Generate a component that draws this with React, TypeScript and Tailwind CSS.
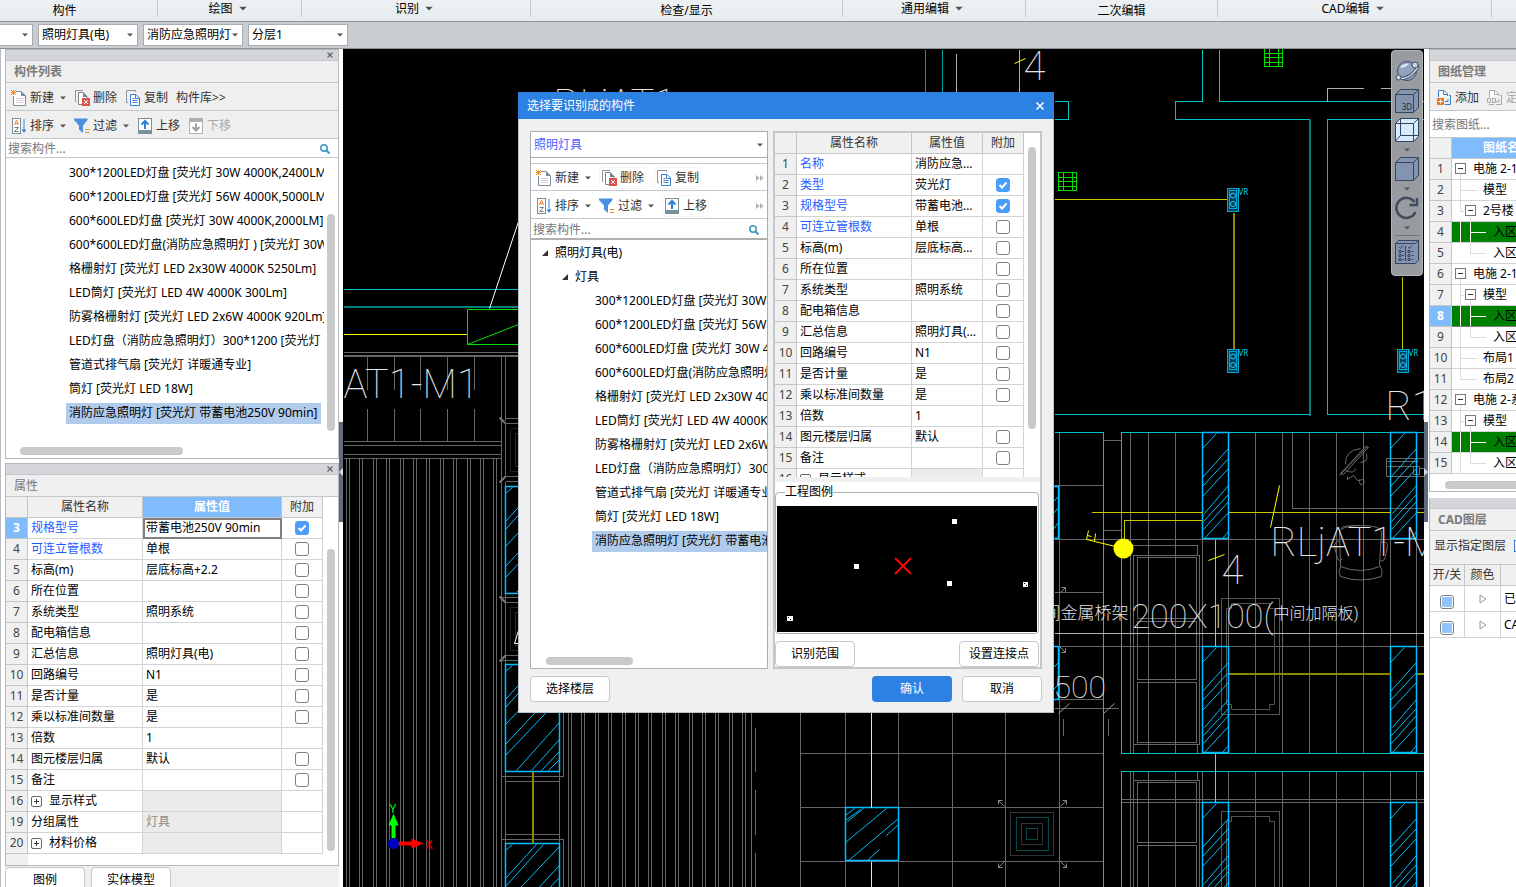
import { useState } from "react";
import type { ReactNode } from "react";
import clsx from "clsx";

type PropertyRow = {
  no: number;
  name: string;
  value?: string;
  attach?: "on" | "off";
  required?: boolean;
  group?: boolean;
  readOnly?: boolean;
};

const ribbonGroups = [
  { name: "构件" },
  { name: "绘图", menu: true },
  { name: "识别", menu: true },
  { name: "检查/显示" },
  { name: "通用编辑", menu: true },
  { name: "二次编辑" },
  { name: "CAD编辑", menu: true },
];

const components = [
  "300*1200LED灯盘 [荧光灯 30W 4000K,2400LM]",
  "600*1200LED灯盘 [荧光灯 56W 4000K,5000LM]",
  "600*600LED灯盘 [荧光灯 30W 4000K,2000LM]",
  "600*600LED灯盘(消防应急照明灯 ) [荧光灯 30W]",
  "格栅射灯 [荧光灯 LED 2x30W 4000K 5250Lm]",
  "LED筒灯 [荧光灯 LED 4W 4000K 300Lm]",
  "防雾格栅射灯 [荧光灯 LED 2x6W 4000K 920Lm]",
  "LED灯盘（消防应急照明灯）300*1200 [荧光灯",
  "管道式排气扇 [荧光灯 详暖通专业]",
  "筒灯 [荧光灯 LED 18W]",
  "消防应急照明灯 [荧光灯 带蓄电池250V 90min]",
];

const baseRows: PropertyRow[] = [
  { no: 4, name: "可连立管根数", value: "单根", attach: "off", required: true },
  { no: 5, name: "标高(m)", value: "层底标高+2.2", attach: "off" },
  { no: 6, name: "所在位置", attach: "off" },
  { no: 7, name: "系统类型", value: "照明系统", attach: "off" },
  { no: 8, name: "配电箱信息", attach: "off" },
  { no: 9, name: "汇总信息", value: "照明灯具(电)", attach: "off" },
  { no: 10, name: "回路编号", value: "N1", attach: "off" },
  { no: 11, name: "是否计量", value: "是", attach: "off" },
  { no: 12, name: "乘以标准间数量", value: "是", attach: "off" },
  { no: 13, name: "倍数", value: "1" },
  { no: 14, name: "图元楼层归属", value: "默认", attach: "off" },
  { no: 15, name: "备注", attach: "off" },
  { no: 16, name: "显示样式", group: true, readOnly: true },
];

const modelRow: PropertyRow = {
  no: 3,
  name: "规格型号",
  value: "带蓄电池250V 90min",
  attach: "on",
  required: true,
};

const panelRows: PropertyRow[] = [
  modelRow,
  ...baseRows,
  { no: 19, name: "分组属性", value: "灯具", readOnly: true },
  { no: 20, name: "材料价格", group: true, readOnly: true },
];

const dialogRows: PropertyRow[] = [
  { no: 1, name: "名称", value: "消防应急照明灯", required: true },
  { no: 2, name: "类型", value: "荧光灯", attach: "on", required: true },
  modelRow,
  ...baseRows,
];

const drawings = [
  { name: "电施 2-1", level: 0, box: true, guide: "M8 15V20" },
  { name: "模型", level: 1, guide: "M8 0V20M8 10H25" },
  { name: "2号楼", level: 1, box: true, guide: "M8 0V10H12M18 15V20" },
  { name: "入区", level: 2, guide: "M8 0V20M18 0V20M18 10H34", used: true },
  { name: "入区", level: 2, guide: "M18 0V10H34" },
  { name: "电施 2-1", level: 0, box: true, guide: "M8 15V20" },
  { name: "模型", level: 1, box: true, guide: "M8 0V20M8 10H12M18 15V20" },
  { name: "入区", level: 2, guide: "M8 0V20M18 0V20M18 10H34", used: true, current: true },
  { name: "入区", level: 2, guide: "M8 0V20M18 0V10H34" },
  { name: "布局1", level: 1, guide: "M8 0V20M8 10H25" },
  { name: "布局2", level: 1, guide: "M8 0V10H25" },
  { name: "电施 2-系", level: 0, box: true, guide: "M8 15V20" },
  { name: "模型", level: 1, box: true, guide: "M8 0V20M8 10H12M18 15V20" },
  { name: "入区", level: 2, guide: "M8 0V20M18 0V20M18 10H34", used: true },
  { name: "入区", level: 2, guide: "M8 0V20M18 0V10H34" },
];

/* ---------- icons ---------- */

function Caret({ className = "h-1 w-1.5" }: { className?: string }) {
  return (
    <svg viewBox="0 0 6 4" className={clsx("shrink-0", className)} aria-hidden="true">
      <path d="M0 0.500H6L3 3.500Z" fill="#555" />
    </svg>
  );
}

function IconNew() {
  return (
    <svg viewBox="0 0 16 16" className="size-4" fill="none" aria-hidden="true">
      <path d="M5 1.500H10L14.500 6V15.500H2.500V6" fill="#fff" stroke="#78909c" />
      <path d="M10 1V6H15Z" fill="#78909c" />
      <path d="M5 8.500H12.500M5 10.500H12.500M5 12.500H12.500" stroke="#d8d0e0" />
      <path d="M0 0.500H1M2 0.500H3M4 0.500H5M1 1.500H4M0 2.500H5M1 3.500H4M0 4.500H1M2 4.500H3M4 4.500H5" stroke="#f0932b" />
    </svg>
  );
}

function IconDelete() {
  return (
    <svg viewBox="0 0 16 16" className="size-4" fill="none" aria-hidden="true">
      <path d="M1.500 12V0.500H9" stroke="#8a9499" />
      <path d="M8 14.500H4.500V2.500H9L13 6.500V8" fill="#fff" stroke="#78828a" />
      <path d="M9 2V7H13.500Z" fill="#78828a" />
      <rect x="8" y="8" width="8" height="8" fill="#d9534f" />
      <path d="M10 10L14 14M14 10L10 14" stroke="#fff" />
    </svg>
  );
}

function IconCopy() {
  return (
    <svg viewBox="0 0 16 16" className="size-4" fill="none" aria-hidden="true">
      <path d="M3 12.500H1.500V0.500H10.500V2" stroke="#8a9499" />
      <path d="M5.500 4.500H11L14.500 8V15.500H5.500Z" fill="#fff" stroke="#3a7fd0" />
      <path d="M10.500 4.500V8.500H14.500M7.500 8.500H9.500M7.500 10.500H12.500M7.500 12.500H12.500" stroke="#3a7fd0" />
    </svg>
  );
}

function IconSort() {
  return (
    <svg viewBox="0 0 16 16" className="size-4" fill="none" aria-hidden="true">
      <rect x="1.500" y="0.500" width="8" height="15" fill="#fff" stroke="#78909c" />
      <path d="M3.500 7L5.500 2L7.500 7M4 5.500H7" stroke="#f08030" />
      <path d="M3.500 9.500H7.500L3.500 13.500H7.500" stroke="#707880" />
      <path d="M13 1V13" stroke="#3a86dc" />
      <path d="M10.500 11.500H15.500L13 15Z" fill="#3a86dc" />
    </svg>
  );
}

function IconFilter() {
  return (
    <svg viewBox="0 0 16 16" className="size-4" fill="none" aria-hidden="true">
      <path d="M0 0.500H13.500V2L9 7.500V15L5 11.500V7.500L0 2Z" fill="#4a90e2" />
      <path d="M11 11.500H15.500M11 14.500H15.500" stroke="#f0932b" />
    </svg>
  );
}

function IconMove({ down }: { down?: boolean }) {
  return (
    <svg viewBox="0 0 16 16" className="size-4" fill="none" aria-hidden="true">
      {down ? (
        <>
          <rect x="1.500" y="0.500" width="13" height="15" fill="#fff" stroke="#b0b0b0" />
          <rect x="1" y="0" width="14" height="4" fill="#b0b0b0" />
          <path d="M8 5.500V12M4.500 9L8 12.500L11.500 9" stroke="#a0a0a0" strokeWidth="2" />
        </>
      ) : (
        <>
          <rect x="1.500" y="0.500" width="13" height="15" fill="#fff" stroke="#78909c" />
          <rect x="1" y="12" width="14" height="4" fill="#78909c" />
          <path d="M8 11V3.500M4.500 6.500L8 3L11.500 6.500" stroke="#2f80d8" strokeWidth="2" />
        </>
      )}
    </svg>
  );
}

function IconSearch() {
  return (
    <svg viewBox="0 0 10 10" className="size-2.5 shrink-0" fill="none" aria-hidden="true">
      <circle cx="4" cy="4" r="3.200" stroke="#3a97c9" strokeWidth="1.500" />
      <path d="M6.200 6.200L9.500 9.500" stroke="#3a97c9" strokeWidth="2" />
    </svg>
  );
}

function IconSheet({ disabled }: { disabled?: boolean }) {
  const line = disabled ? "#a8a8a8" : "#3a7fd0";
  return (
    <svg viewBox="0 0 16 16" className="size-4" fill="none" aria-hidden="true">
      <path d="M2.500 7V0.500H8L11.500 4V6" fill="#fff" stroke={line} />
      <path d="M7.500 0.500V4.500H11.500M9 14.500H14.500V5.500H13M9 11.500H12V9" stroke={line} />
      {disabled ? (
        <path d="M0.500 8.500H3.500V12.500H0.500ZM5.500 8.500H8.500V12.500H5.500ZM2 14.500H7" stroke={line} />
      ) : (
        <>
          <rect x="1" y="8" width="7" height="7" fill="#f07a24" />
          <path d="M4.500 9.500V13.500M2.500 11.500H6.500" stroke="#fff" />
        </>
      )}
    </svg>
  );
}

function PlusBox() {
  return (
    <svg viewBox="0 0 11 11" className="size-[11px] shrink-0" fill="none" aria-hidden="true">
      <rect x="0.500" y="0.500" width="10" height="10" rx="1.500" fill="#fff" stroke="#666" />
      <path d="M3 5.500H8M5.500 3V8" stroke="#333" />
    </svg>
  );
}

function Cube({ label, open }: { label?: string; open?: boolean }) {
  return (
    <svg viewBox="0 0 24 24" className="size-6" fill="none" stroke="#34455c" aria-hidden="true">
      <path d="M0.500 5.500L5.500 0.500H23.500V18.500L18.500 23.500H0.500Z" fill={open ? "#d6ebff" : "#8294ae"} />
      <path d="M0.500 5.500H18.500V23.500M18.500 5.500L23.500 0.500" />
      {open && <path d="M5.500 0.500V17.500H23M5.500 17.500L0.500 23" />}
      {label && (
        <text x="12" y="21" textAnchor="middle" fontSize="8" fill="#1c2c40" stroke="none">
          {label}
        </text>
      )}
    </svg>
  );
}

/* ---------- shared controls ---------- */

function Combo({ label, value, className }: { label: string; value: string; className?: string }) {
  return (
    <div className={clsx("relative border border-[#a9adb1] bg-white", className)}>
      <select
        aria-label={label}
        defaultValue={value}
        className="block h-full w-full appearance-none overflow-hidden bg-transparent pl-[3px] outline-none"
      >
        <option>{value}</option>
      </select>
      <Caret className="pointer-events-none absolute top-1/2 right-1 h-1 w-1.5 -translate-y-1/2" />
    </div>
  );
}

function ToolButton(props: {
  icon?: ReactNode;
  label: string;
  menu?: boolean;
  disabled?: boolean;
  boxed?: boolean;
}) {
  return (
    <button
      type="button"
      disabled={props.disabled}
      className={clsx(
        "flex shrink-0 items-center gap-[3px] whitespace-nowrap",
        props.disabled ? "text-[#a8a8a8]" : "text-[#333]",
        props.boxed && "h-[22px] rounded-sm border border-[#f5f5f5] px-px"
      )}
    >
      {props.icon}
      <span>{props.label}</span>
      {props.menu && <Caret className="ml-[3px] h-1 w-1.5" />}
    </button>
  );
}

function SearchBox({ label, className }: { label: string; className?: string }) {
  return (
    <div className={clsx("flex shrink-0 items-center bg-white pt-0.5 pr-2 pl-0.5", className)}>
      <input
        type="search"
        aria-label={label}
        placeholder={label}
        className="min-w-0 flex-1 outline-none placeholder:text-[#777]"
      />
      <IconSearch />
    </div>
  );
}

function CheckBox({ label, defaultChecked }: { label: string; defaultChecked: boolean }) {
  return (
    <span className="relative mx-auto grid size-3.5 place-items-center">
      <input
        type="checkbox"
        aria-label={label}
        defaultChecked={defaultChecked}
        className="peer size-3.5 appearance-none rounded-[3px] border border-[#808080] bg-white checked:border-[#4a9df8] checked:bg-[#4a9df8]"
      />
      <svg
        viewBox="0 0 14 14"
        className="pointer-events-none absolute hidden size-3.5 peer-checked:block"
        fill="none"
        aria-hidden="true"
      >
        <path d="M3.500 7L6 9.500L10.500 4.500" stroke="#fff" strokeWidth="2" />
      </svg>
    </span>
  );
}

function PropertyTable({ rows, current, compact }: { rows: PropertyRow[]; current?: number; compact?: boolean }) {
  const head = "border-r border-b border-[#c6c6c6]";
  return (
    <table className={clsx("table-fixed border-separate border-spacing-0", compact ? "w-[249px]" : "w-[317px]")}>
      <colgroup>
        <col className="w-[22px]" />
        <col className="w-[115px]" />
        <col className={compact ? "w-[71px]" : "w-[139px]"} />
        <col className="w-[41px]" />
      </colgroup>
      <thead>
        <tr className="h-[21px] bg-[#f0f0f0] text-[#333]">
          <th className={head} aria-label="行号" />
          <th className={clsx(head, "font-normal")}>属性名称</th>
          <th className={clsx(head, current ? "bg-[#80bbfb] font-bold text-white" : "font-normal")}>属性值</th>
          <th className={clsx(head, "font-normal")}>附加</th>
        </tr>
      </thead>
      <tbody>
        {rows.map((row) => (
          <tr key={row.no} className="h-[21px]">
            <td
              className={clsx(
                "border-r border-b border-[#c6c6c6] text-center",
                row.no === current ? "bg-[#80bbfb] font-bold text-white" : "bg-[#f0f0f0] text-[#444]"
              )}
            >
              {row.no}
            </td>
            <td className={clsx("border-r border-b border-[#d4d4d4] pl-[3px]", row.required && "text-[#1f5eff]")}>
              <span className="flex items-center gap-[7px] whitespace-nowrap">
                {row.group && <PlusBox />}
                {row.name}
              </span>
            </td>
            <td
              className={clsx(
                "border-r border-b border-[#d4d4d4] pr-1 pl-[3px]",
                row.readOnly && "bg-[#ebebeb] text-[#8c8c8c]",
                row.no === current && "outline-2 -outline-offset-2 outline-[#808080]"
              )}
            >
              <span className="block truncate">{row.value}</span>
            </td>
            <td className="border-r border-b border-[#d4d4d4]">
              {row.attach && <CheckBox label={row.name} defaultChecked={row.attach === "on"} />}
            </td>
          </tr>
        ))}
      </tbody>
    </table>
  );
}

function ComponentItem({ name, selected, onSelect }: { name: string; selected: boolean; onSelect: () => void }) {
  return (
    <li className="flex h-6 items-center">
      <button
        type="button"
        onClick={onSelect}
        className={clsx("h-[21px] px-[3px] whitespace-pre", selected && "bg-[#b0cbec]")}
      >
        {name}
      </button>
    </li>
  );
}

function PanelHead({ title, closable, bold }: { title: string; closable?: boolean; bold?: boolean }) {
  return (
    <>
      <div className="flex h-[11px] shrink-0 items-center justify-end border-b border-[#c3c7cc] bg-[#d5d6db] pr-[5px]">
        {closable && (
          <button type="button" aria-label={"关闭" + title}>
            <svg viewBox="0 0 6 6" className="size-1.5" fill="none" stroke="#666" aria-hidden="true">
              <path d="M0.500 0.500L5.500 5.500M5.500 0.500L0.500 5.500" strokeWidth="1.300" />
            </svg>
          </button>
        )}
      </div>
      <h2
        className={clsx(
          "flex h-[22px] shrink-0 items-center border-b border-[#c3c7cc] bg-[#efefef] pl-2 text-[#7a7a7a]",
          bold && "font-bold"
        )}
      >
        {title}
      </h2>
    </>
  );
}

/* ---------- docks ---------- */

function LeftDock() {
  const [selected, setSelected] = useState(10);

  return (
    <aside className="relative flex w-[343px] shrink-0 flex-col border-l border-[#b9bcc0] bg-white pr-1 pl-1">
      <section className="flex h-[410px] shrink-0 flex-col border border-[#b4b7bb]">
        <PanelHead title="构件列表" closable bold />
        <div className="flex h-7 shrink-0 items-center gap-2 border-b border-[#c3c7cc] bg-[#efefef] pt-0.5 pl-[5px]">
          <ToolButton icon={<IconNew />} label="新建" menu />
          <ToolButton icon={<IconDelete />} label="删除" />
          <ToolButton icon={<IconCopy />} label="复制" />
          <ToolButton label="构件库&gt;&gt;" />
        </div>
        <div className="flex h-7 shrink-0 items-center gap-2 border-b border-[#c3c7cc] bg-[#efefef] pt-0.5 pl-[5px]">
          <ToolButton icon={<IconSort />} label="排序" menu />
          <ToolButton icon={<IconFilter />} label="过滤" menu />
          <ToolButton icon={<IconMove />} label="上移" />
          <ToolButton icon={<IconMove down />} label="下移" disabled />
        </div>
        <SearchBox label="搜索构件..." className="h-[19px] border-b border-[#c3c7cc]" />
        <div className="relative min-h-0 flex-1 pt-[3px] pr-3.5 pl-[60px]">
          <ul className="overflow-hidden">
            {components.map((name, i) => (
              <ComponentItem key={name} name={name} selected={i === selected} onSelect={() => setSelected(i)} />
            ))}
          </ul>
          <div className="absolute top-14 right-[3px] h-[217px] w-2 rounded-full bg-[#c9c9c9]" />
          <div className="absolute bottom-[3px] left-3.5 h-2 w-[163px] rounded-full bg-[#c9c9c9]" />
        </div>
      </section>

      <section className="mt-1 flex h-[403px] shrink-0 flex-col border border-[#b4b7bb]">
        <PanelHead title="属性" closable />
        <div className="relative min-h-0 flex-1 overflow-hidden">
          <PropertyTable rows={panelRows} current={3} />
          <div className="h-full w-[22px] bg-[#f0f0f0]" />
          <div className="absolute top-[52px] right-[3px] bottom-3.5 w-2 rounded-full bg-[#c9c9c9]" />
        </div>
      </section>

      <div className="flex min-h-0 flex-1 items-start gap-1.5 overflow-hidden bg-[#efefef] pt-px">
        <button type="button" className="h-[26px] w-20 shrink-0 rounded-sm border border-[#c6c6c6] bg-white">
          图例
        </button>
        <button type="button" className="h-[26px] w-20 shrink-0 rounded-sm border border-[#c6c6c6] bg-white">
          实体模型
        </button>
      </div>

      <button
        type="button"
        aria-label="收起左侧面板"
        className="absolute top-[373px] right-0 grid h-[100px] w-1 place-items-center bg-[#5f6b7a]"
      >
        <svg viewBox="0 0 4 8" className="h-2 w-1" aria-hidden="true">
          <path d="M4 0V8L0 4Z" fill="#d8dce0" />
        </svg>
      </button>
    </aside>
  );
}

function RightDock() {
  return (
    <aside className="relative flex w-[92px] shrink-0 flex-col overflow-hidden bg-white pl-[5px]">
      <section className="flex h-[443px] shrink-0 flex-col border-y border-l border-[#b4b7bb]">
        <PanelHead title="图纸管理" bold />
        <div className="flex h-7 shrink-0 items-center gap-2 border-b border-[#c3c7cc] bg-[#efefef] pt-0.5 pl-1.5">
          <ToolButton icon={<IconSheet />} label="添加" />
          <ToolButton icon={<IconSheet disabled />} label="定位" disabled />
        </div>
        <SearchBox label="搜索图纸..." className="h-[27px] w-36 border-b border-[#c3c7cc]" />
        <div className="h-[339px] shrink-0 overflow-hidden">
          <table className="w-[168px] table-fixed border-separate border-spacing-0">
            <colgroup>
              <col className="w-[22px]" />
              <col />
            </colgroup>
            <thead>
              <tr className="h-[21px]">
                <th className="border-r border-b border-[#c6c6c6] bg-[#f0f0f0]" aria-label="行号" />
                <th className="border-b border-[#c6c6c6] bg-[#80bbfb] pl-[31px] text-left whitespace-nowrap text-white">
                  图纸名称
                </th>
              </tr>
            </thead>
            <tbody>
              {drawings.map((row, i) => (
                <tr key={i} className="h-[21px]">
                  <td
                    className={clsx(
                      "border-r border-b border-[#c6c6c6] text-center",
                      row.current ? "bg-[#80bbfb] font-bold text-white" : "bg-[#f0f0f0] text-[#444]"
                    )}
                  >
                    {i + 1}
                  </td>
                  <td
                    className={clsx(
                      "border-b p-0",
                      row.used ? "bg-[#008000]" : "bg-white",
                      row.current ? "border-[#808080]" : "border-[#d4d4d4]"
                    )}
                  >
                    <span className="flex h-5 items-center whitespace-nowrap">
                      <svg
                        width={21 + row.level * 10}
                        height="20"
                        fill="none"
                        className="shrink-0"
                        shapeRendering="crispEdges"
                        aria-hidden="true"
                      >
                        <path d={row.guide} stroke={row.used ? "#fff" : "#dcdcdc"} />
                        {row.box && (
                          <g transform={row.level ? "translate(13 4)" : "translate(3 4)"}>
                            <rect x="0.500" y="0.500" width="10" height="10" rx="1" fill="#fff" stroke="#777" />
                            <path d="M3 5.500H8" stroke="#333" />
                          </g>
                        )}
                      </svg>
                      {row.name}
                    </span>
                  </td>
                </tr>
              ))}
            </tbody>
          </table>
        </div>
        <div className="mt-1 ml-[15px] h-2 rounded-l-full bg-[#c9c9c9]" />
      </section>

      <section className="mt-1.5 flex min-h-0 flex-1 flex-col border-l border-[#b4b7bb]">
        <PanelHead title="CAD图层" bold />
        <div className="flex h-[33px] shrink-0 items-center gap-2 bg-[#efefef] pb-1 pl-1 whitespace-nowrap text-[#333]">
          显示指定图层
          <svg viewBox="0 0 14 14" className="size-3.5 shrink-0" fill="none" stroke="#3a7fd0" aria-hidden="true">
            <rect x="0.500" y="1.500" width="13" height="11" />
            <path d="M3 5.500H11M3 8.500H11" />
          </svg>
        </div>
        <table className="w-[168px] table-fixed border-separate border-spacing-0 border-t border-[#c6c6c6]">
          <colgroup>
            <col className="w-[35px]" />
            <col className="w-9" />
            <col />
          </colgroup>
          <thead>
            <tr className="h-[21px] bg-[#f0f0f0] text-[#333]">
              <th className="border-r border-b border-[#c6c6c6] font-normal whitespace-nowrap">开/关</th>
              <th className="border-r border-b border-[#c6c6c6] font-normal">颜色</th>
              <th className="border-b border-[#c6c6c6]" aria-label="名称" />
            </tr>
          </thead>
          <tbody>
            {["已提取", "CAD"].map((name) => (
              <tr key={name} className="h-[26px]">
                <td className="border-r border-b border-[#d4d4d4] pt-1.5 text-center">
                  <input
                    type="checkbox"
                    aria-label={name}
                    defaultChecked
                    className="mx-auto block size-3.5 appearance-none rounded-[3px] border border-[#808080] bg-white p-px checked:bg-[#90c4ff] checked:bg-clip-content"
                  />
                </td>
                <td className="border-r border-b border-[#d4d4d4]">
                  <svg viewBox="0 0 8 10" className="mx-auto h-2.5 w-2" fill="none" aria-hidden="true">
                    <path d="M1 1L7 5L1 9Z" stroke="#999" />
                  </svg>
                </td>
                <td className="border-b border-[#d4d4d4] pl-[3px]">{name}</td>
              </tr>
            ))}
          </tbody>
        </table>
      </section>

      <button
        type="button"
        aria-label="收起右侧面板"
        className="absolute top-[373px] left-0 grid h-[100px] w-1 place-items-center bg-[#5f6b7a]"
      >
        <svg viewBox="0 0 4 8" className="h-2 w-1" aria-hidden="true">
          <path d="M0 0V8L4 4Z" fill="#d8dce0" />
        </svg>
      </button>
    </aside>
  );
}

/* ---------- drawing ---------- */

function Column({ x, y }: { x: number; y: number }) {
  return (
    <g transform={`translate(${x} ${y})`} stroke="#00bfff">
      <path
        strokeWidth="1"
        d="M0 16L14 1M0 45L26 16M0 54L26 26M0 64L26 36M2 81L26 53M1 89L26 62M1 97L26 69M2 106L26 80M20 106L26 99"
      />
      <rect width="26" height="106" strokeWidth="1.500" />
    </g>
  );
}

function WideColumn({ x, y }: { x: number; y: number }) {
  return (
    <g transform={`translate(${x} ${y})`} stroke="#00bfff">
      <path
        strokeWidth="1"
        d="M0 7L7 1M0 35L31 1M0 43L38 1M0 60L54 3M0 80L54 22M0 91L54 34M11 106L54 58M26 106L54 75M36 106L54 87M43 106L54 95"
      />
      <rect width="54" height="107" strokeWidth="1.500" />
    </g>
  );
}

function Socket({ x, y }: { x: number; y: number }) {
  return (
    <g transform={`translate(${x} ${y})`} stroke="#00a8d8" fill="#00415a">
      <rect width="11" height="23" />
      <rect x="2" y="2" width="7" height="18" />
      <circle cx="5.500" cy="7" r="2.500" stroke="#30c8ff" />
      <circle cx="5.500" cy="15.500" r="2.500" stroke="#30c8ff" />
      <text x="11" y="6" fontSize="8" fill="#00d0f0" stroke="none">
        VR
      </text>
    </g>
  );
}

function GreenGrid({ x, y }: { x: number; y: number }) {
  return (
    <g transform={`translate(${x} ${y})`} stroke="#00e000" shapeRendering="crispEdges">
      <rect width="18" height="18" />
      <path d="M5 0V18M14 0V18M0 5H18M0 9H18M0 14H18" />
    </g>
  );
}

function TableBlock({ y }: { y: number }) {
  return (
    <g transform={`translate(1221 ${y})`} stroke="#555">
      <rect width="58" height="116" />
      <path d="M10 5H48V10H53V106H48V111H10V106H5V10H10Z" />
    </g>
  );
}

function CornerArrow({ x, y, angle }: { x: number; y: number; angle: number }) {
  return <path transform={`translate(${x} ${y}) rotate(${angle})`} d="M-6 6L0 0M-4 0H0V4" stroke="#888" />;
}

function Drawing() {
  const stripes = Array.from({ length: 12 }, (_, i) => 346 + Math.round(i * 13.4));
  const stripesRight = Array.from({ length: 14 }, (_, i) => 568 + Math.round(i * 13.4));

  return (
    <svg className="absolute inset-0 size-full" fill="none" aria-label="CAD 图纸" role="img">
      <g transform="translate(-343.500 -49.500)">
        {/* grey building outlines */}
        <g stroke="#666" shapeRendering="crispEdges" transform="translate(1 1)">
          <path d="M343 352H518M343 355H518M343 356H518M343 441H501M343 445H501M343 454H501M343 458H501" />
          <path d="M367 356V389M394 356V389M420 356V389M447 356V389M474 356V389M367 408V441M394 408V441M420 408V441M447 408V441M474 408V441" />
          <path d="M501 356V887M505 356V420M505 481V602M505 656V664M505 771V781M505 834V843M559 712V887M563 712V776M563 839V887" />
          <path d="M505 418H518M505 423H518M505 476H518M505 481H518M505 423V476M501 597H518M505 602H518M505 655H518M501 660H518M505 602V655" />
          <path d="M501 776H563M501 839H563M505 781H559V834H505Z" />
          {stripes.map((x) => (
            <path key={x} d={`M${x} 458V887M${x + 3} 458V887`} />
          ))}
          {stripesRight.map((x) => (
            <path key={x} d={`M${x} 712V887M${x + 3} 712V887`} />
          ))}
          <path d="M751 712V887M755 727V771M755 789V834M755 852V887" />
          <path d="M800 712V887M845 712V887M898 712V887M952 712V887M1005 712V887M1059 432V887" />
          <path d="M800 753H1103M800 807H1103M800 861H1103M1054 485H1103M1054 539H1424M1054 592H1103M1054 646H1424M1054 699H1103M1054 708H1118" />
          <path d="M1103 440H1121M1103 530H1121" />
          <path d="M1130 432V753M1148 432V753M1175 432V753M1255 432V753M1282 432V753M1309 432V753M1336 432V753M1363 432V753" />
          <path d="M1130 771V887M1148 771V887M1175 771V887M1202 771V802M1228 771V802M1255 771V887M1282 771V887M1309 771V887M1336 771V887M1363 771V887M1390 538V646M1416 538V646M1390 771V802M1416 771V802M1202 538V646M1228 538V646" />
          <path d="M1121 799H1424M1121 802H1424M1292 432V508H1424" />
          <path d="M1132 545H1197V555M1133 555H1199V744H1133ZM1137 557H1196V618H1137ZM1137 621H1196V679H1137ZM1137 682H1196V742H1137ZM1133 744V753M1197 744V753" />
          <path d="M1133 771V780M1197 771V780M1133 887V780H1199V887M1137 782H1196V842H1137ZM1137 887V845H1196V887" />
          <path d="M1063 718V735M1108 718V735" />
        </g>
        <g transform="translate(1 1)">
          <path d="M1058 713L1069 703M1103 713L1114 703" stroke="#999" />
          <TableBlock y={598} />
          <TableBlock y={811} />
          <CornerArrow x={998} y={800} angle={-90} />
          <CornerArrow x={1066} y={800} angle={0} />
          <CornerArrow x={998} y={867} angle={180} />
          <CornerArrow x={1066} y={867} angle={90} />
          <CornerArrow x={1065} y={587} angle={0} />
          <CornerArrow x={1065} y={652} angle={90} />
          <path d="M505 423L499 417M505 476L499 482M505 602L499 596M505 655L499 661" stroke="#777" strokeWidth="2" />
        </g>

        {/* ceiling fixture */}
        <g shapeRendering="crispEdges" transform="translate(1 1)">
          <path d="M1010 812H1053V855H1010ZM1021 823H1042V844H1021Z" stroke="#333" />
          <path d="M1016 817H1048V850H1016ZM1026 828H1037V839H1026Z" stroke="#004a4a" />
          <path d="M510 428H518M510 428V471H518M510 607H518M510 607V650H518" stroke="#222" />
          <path d="M518 433H515V466H518M518 612H515V645H518" stroke="#003c3c" />
        </g>

        {/* furniture */}
        <g stroke="#6a6a6a" transform="translate(1 1)">
          <path d="M1341 528Q1340 525 1360 525Q1382 525 1381 532L1379 564Q1383 570 1381 576Q1360 583 1340 576Q1337 571 1340 566L1339 530Q1345 525 1360 525M1340 566Q1360 574 1379 566M1339 541Q1334 540 1334 546L1337 558Q1339 562 1342 558M1380 542Q1386 540 1387 545L1385 556Q1383 562 1380 560" />
          <path d="M1339 475L1367 446M1340 473L1343 474L1368 447L1365 446ZM1345 464Q1344 450 1360 448M1355 468Q1354 474 1345 470M1360 462Q1368 462 1366 453M1347 476L1347 479L1353 475L1357 480L1363 479Q1365 484 1360 484Q1358 481 1359 479" />
          <path d="M1386 458H1424V476H1386ZM1387 461H1418M1387 466H1418M1413 466H1419V474H1413ZM1419 468H1424" />
        </g>

        {/* walls */}
        <g stroke="#00c4c4" shapeRendering="crispEdges" transform="translate(1 1)">
          <path d="M343 289H518M1054 101H1068V119H1054M1202 49V101H1175V119H1309M1309 414H1054M1219 49V101H1424M1424 119H1327V414H1424" />
          <path d="M1054 432H1103V887M1121 753V432H1424M1121 753H1424M1121 887V771H1424" />
          <path d="M343 306H518M1309 119V415" stroke="#008080" strokeWidth="2" />
          <path d="M925 49V92M942 49V92" stroke="#00a0a0" />
        </g>

        {/* columns */}
        <g transform="translate(1 1)">
          <WideColumn x={505} y={486} />
          <WideColumn x={505} y={664} />
          <WideColumn x={505} y={843} />
          <Column x={1202} y={432} />
          <Column x={1202} y={646} />
          <Column x={1202} y={802} />
          <Column x={1390} y={432} />
          <Column x={1390} y={646} />
          <Column x={1390} y={802} />
        </g>
        <g stroke="#00bfff" transform="translate(1 1)">
          <path d="M1052 486H1058V538H1052M1052 646H1058V699H1052" strokeWidth="1.500" />
          <path d="M1052 502L1058 496M1052 514L1058 507M1052 530L1058 522M1052 668L1058 662M1052 690L1058 684" />
          <rect x="845" y="807" width="53" height="53" strokeWidth="1.500" />
          <path d="M845 815L854 808M845 820L860 809M847 821L863 808M845 842L886 808M848 860L898 818M886 835L898 824M867 860L879 849" />
        </g>

        {/* wiring */}
        <g stroke="#c8c800" shapeRendering="crispEdges" transform="translate(1 1)">
          <path d="M343 334H467M871 712V807M871 861V887" stroke="#ffff00" />
          <path d="M1019 49V92M1054 199H1227M1402 276V349M1091 512H1202M1228 512H1390M1416 512H1424M1202 520H1124V540M1215 539V646M1215 753V802" />
          <path d="M532 771V843M1233 212V349M1228 673H1390M1416 673H1424" stroke="#8a8a00" strokeWidth="2" />
        </g>
        <g transform="translate(1 1)">
          <path
            d="M1014 63L1025 58M1086 539L1115 546M1086 539L1088 530M1094 541L1095 533M1087 535L1091 536M1208 560L1224 554M1279 485L1270 527"
            stroke="#ffff00"
          />
          <circle cx="1123" cy="548" r="10" fill="#ffff00" />
          <path d="M518 309H467V344H518M467 344L518 324" stroke="#00e000" />
          <path d="M489 308L518 221M514 643L518 630M514 643H518" stroke="#fff" />
          <path d="M956 53V92M1327 101V88H1363M1380 88H1391M1054 633H1424" stroke="#b0b0b0" shapeRendering="crispEdges" />
          <GreenGrid x={1264} y={48} />
          <GreenGrid x={1058} y={172} />
          <Socket x={1227} y={188} />
          <Socket x={1227} y={349} />
          <Socket x={1397} y={349} />
        </g>

        {/* annotations */}
        <g
          className="font-['Liberation_Sans_Narrow','Roboto','Noto_Sans_CJK_SC',sans-serif] font-thin"
          fill="#e4e4e4"
          fontSize="40"
        >
          <text x="554" y="118">RLjAT1</text>
          <text x="344" y="398">AT1-M1</text>
          <text x="1024" y="80">4</text>
          <text x="1222" y="584">4</text>
          <text x="1386" y="420">R1A</text>
          <text x="1271" y="556">RLjAT1-M</text>
          <text x="1054" y="698" fontSize="32">500</text>
          <text x="1044" y="619" fontSize="17" fontWeight="300">间金属桥架</text>
          <text x="1132" y="628" fontSize="34">200X100(</text>
          <text x="1274" y="619" fontSize="16" fontWeight="300">中间加隔板)</text>
        </g>

        {/* axis */}
        <g transform="translate(1 1)">
          <path d="M393 838V824" stroke="#00ff00" strokeWidth="4" />
          <path d="M388 825L393 813L398 825Z" fill="#00ff00" />
          <path d="M398 843H412" stroke="#ff0000" strokeWidth="4" />
          <path d="M411 838L423 843L411 848Z" fill="#ff0000" />
          <circle cx="393" cy="843" r="5.500" fill="#0000c0" />
          <text x="389" y="812" fontSize="12" fill="#00ff00">Y</text>
          <text x="425" y="848" fontSize="12" fill="#ff0000">X</text>
        </g>
      </g>
    </svg>
  );
}

function ViewBar() {
  const caret = (label: string) => (
    <button type="button" aria-label={label} className="grid h-[15px] w-6 place-items-center">
      <Caret />
    </button>
  );

  return (
    <nav
      aria-label="视图"
      className="absolute top-px right-px flex w-8 flex-col items-center rounded-sm border border-[#b4b6ba] bg-[#989ba0] pt-[9px] pb-[11px]"
    >
      <button type="button" aria-label="动态观察" className="mb-[7px]">
        <svg viewBox="0 0 24 22" className="h-[22px] w-6" fill="none" aria-hidden="true">
          <circle cx="12" cy="11" r="9.500" fill="#8fa3bd" stroke="#3f4d5f" />
          <path d="M5 8Q8 3 14 4Q10 8 5 8Z" fill="#dbe6f2" />
          <path d="M2 18Q10 20 17 14T22 5" stroke="#3f4d5f" strokeWidth="3" />
          <path d="M2 18Q10 20 17 14T22 5" stroke="#c9d6e4" strokeWidth="1.500" />
          <circle cx="20" cy="5" r="3" fill="#c9d6e4" stroke="#3f4d5f" />
          <circle cx="3.500" cy="17.500" r="2.500" fill="#c9d6e4" stroke="#3f4d5f" />
        </svg>
      </button>
      <button type="button" aria-label="三维" className="mb-[5px]">
        <Cube label="3D" />
      </button>
      <button type="button" aria-label="线框">
        <Cube open />
      </button>
      {caret("线框选项")}
      <button type="button" aria-label="视角">
        <Cube />
      </button>
      {caret("视角选项")}
      <button type="button" aria-label="旋转">
        <svg viewBox="0 0 24 24" className="size-6" fill="none" stroke="#3f4d5f" strokeWidth="2.500" aria-hidden="true">
          <path d="M20.500 16A10 10 0 1 1 19.500 6" />
          <path d="M22 2V9H14.500" />
        </svg>
      </button>
      {caret("旋转选项")}
      <div className="mb-1 h-px w-6 bg-[#6f747a]" />
      <button type="button" aria-label="显示设置">
        <svg viewBox="0 0 24 24" className="size-6" fill="none" stroke="#34455c" aria-hidden="true">
          <path d="M0.500 3.500L3.500 0.500H23.500V20L20.500 23.500H0.500Z" fill="#8294ae" />
          <path d="M0.500 3.500H20.500M23.500 0.500L20.500 3.500" />
          <path d="M4 7L5.500 8.500L8 5.500M13 7L14.500 8.500L17 5.500M10.500 6V21" />
          <path d="M4 10.500H6V12.500H4ZM4 14.500H6V16.500H4ZM4 18.500H6V20.500H4ZM13 10.500H15V12.500H13ZM13 14.500H15V16.500H13ZM13 18.500H15V20.500H13ZM7 11.500H9M7 15.500H9M7 19.500H9M16.500 11.500H18.500M16.500 15.500H18.500M16.500 19.500H18.500" />
        </svg>
      </button>
    </nav>
  );
}

/* ---------- dialog ---------- */

function MoreTools() {
  return (
    <button type="button" aria-label="更多" className="ml-auto pr-[3px]">
      <svg viewBox="0 0 8 6" className="h-1.5 w-2" fill="#b0b0b0" aria-hidden="true">
        <path d="M0 0L3.500 3L0 6ZM4 0L7.500 3L4 6Z" />
      </svg>
    </button>
  );
}

function TreeNode({ name }: { name: string }) {
  return (
    <span className="flex h-6 items-center gap-[7px]">
      <svg viewBox="0 0 6 6" className="size-1.5" aria-hidden="true">
        <path d="M6 0V6H0Z" fill="#333" />
      </svg>
      {name}
    </span>
  );
}

function PickDialog() {
  const [selected, setSelected] = useState(10);
  const plain = "h-[26px] w-20 rounded-sm border border-[#c8c8c8] bg-white";

  return (
    <div
      role="dialog"
      aria-labelledby="pick-title"
      className="absolute top-[43px] left-[175px] w-[536px] border border-t-0 border-[#b8c0cc] bg-[#f0f0f0]"
    >
      <header className="-mx-px flex h-[27px] items-center justify-between bg-[#2d81e2] pr-2.5 pl-[9px] text-white">
        <h1 id="pick-title">选择要识别成的构件</h1>
        <button type="button" aria-label="关闭">
          <svg viewBox="0 0 8 8" className="size-2" fill="none" stroke="#fff" strokeWidth="1.500" aria-hidden="true">
            <path d="M0.500 0.500L7.500 7.500M7.500 0.500L0.500 7.500" />
          </svg>
        </button>
      </header>

      <div className="px-[11px] pt-3 pb-2.5">
        <div className="flex h-[538px] gap-[5px]">
          <div className="flex w-[238px] shrink-0 flex-col border border-[#acb0b5] bg-white">
            <Combo label="构件类型" value="照明灯具" className="-m-px h-[27px] shrink-0 text-[#4a5cff]" />
            <div className="mt-1.5 flex h-7 shrink-0 items-center gap-2 border-y border-[#c3c7cc] pt-0.5 pl-[5px]">
              <ToolButton icon={<IconNew />} label="新建" menu />
              <ToolButton icon={<IconDelete />} label="删除" boxed />
              <ToolButton icon={<IconCopy />} label="复制" boxed />
              <MoreTools />
            </div>
            <div className="flex h-7 shrink-0 items-center gap-2 border-b border-[#c3c7cc] pt-0.5 pl-[5px]">
              <ToolButton icon={<IconSort />} label="排序" menu />
              <ToolButton icon={<IconFilter />} label="过滤" menu />
              <ToolButton icon={<IconMove />} label="上移" boxed />
              <MoreTools />
            </div>
            <SearchBox label="搜索构件..." className="h-[21px] border-b-2 border-[#b0b0b0]" />
            <div className="relative min-h-0 flex-1 overflow-hidden pt-px">
              <ul>
                <li className="pl-[11px]">
                  <TreeNode name="照明灯具(电)" />
                  <ul>
                    <li className="pl-5">
                      <TreeNode name="灯具" />
                      <ul className="pl-[30px]">
                        {components.map((name, i) => (
                          <ComponentItem
                            key={name}
                            name={name}
                            selected={i === selected}
                            onSelect={() => setSelected(i)}
                          />
                        ))}
                      </ul>
                    </li>
                  </ul>
                </li>
              </ul>
              <div className="absolute bottom-[3px] left-[15px] h-2 w-[87px] rounded-full bg-[#c9c9c9]" />
            </div>
          </div>

          <div className="flex min-w-0 flex-1 flex-col border-2 border-[#c3c7cc] bg-white">
            <div className="relative min-h-0 flex-1 overflow-hidden">
              <PropertyTable rows={dialogRows} compact />
              <div className="absolute top-3.5 right-1 h-[282px] w-2 rounded-full bg-[#c9c9c9]" />
            </div>
            <div className="h-[5px] shrink-0 bg-[#f0f0f0]" />
            <fieldset className="mt-1 mr-px shrink-0 rounded-sm border border-[#b0b0b0] px-px pt-2 pb-px">
              <legend className="ml-2 h-3 leading-3">工程图例</legend>
              <svg className="block h-[126px] w-full bg-black" aria-label="图例预览" role="img">
                <path d="M118 52L134 68M134 52L118 68" stroke="#ff0000" strokeWidth="2" />
                <path
                  d="M175 13H180V18H175ZM77 58H82V63H77ZM170 75H175V80H170ZM246 76H251V81H246ZM10 110H16V115H10Z"
                  fill="#fff"
                />
                <path d="M247 77H248V78H247ZM249 79H250V80H249ZM11 111H12V112H11ZM13 113H14V114H13Z" fill="#000" />
              </svg>
            </fieldset>
            <div className="mt-[7px] flex shrink-0 justify-between pr-px">
              <button type="button" className={plain}>识别范围</button>
              <button type="button" className={plain}>设置连接点</button>
            </div>
          </div>
        </div>

        <footer className="mt-[7px] flex gap-2.5">
          <button type="button" className={plain}>选择楼层</button>
          <button type="submit" className="ml-auto h-[26px] w-20 rounded-sm bg-[#2d81e2] text-white">
            确认
          </button>
          <button type="button" className={plain}>取消</button>
        </footer>
      </div>
    </div>
  );
}

export default function App() {
  return (
    <div className="flex h-screen flex-col overflow-hidden font-['Noto_Sans','Noto_Sans_CJK_SC',sans-serif] text-[12px] leading-[18px] text-black">
      <header className="grid h-[22px] shrink-0 grid-cols-[157fr_144fr_229fr_312fr_183fr_192fr_274fr_25fr] border-b border-[#8b9497] bg-linear-to-b from-[#edf1f3] to-[#e6ecee]">
        {ribbonGroups.map((group, i) => (
          <div key={group.name} className={clsx("pb-1", i === 0 && "pr-7")}>
            <div
              className={clsx(
                "flex h-[17px] items-center justify-center whitespace-nowrap",
                i !== 0 && "border-l border-[#c3c8cb]",
                !group.menu && "pt-1"
              )}
            >
              {group.menu ? (
                <button type="button" className="flex items-center gap-1.5 pr-1">
                  {group.name}
                  <Caret className="h-[5px] w-2" />
                </button>
              ) : (
                group.name
              )}
            </div>
          </div>
        ))}
        <div className="h-[17px] border-l border-[#c3c8cb]" />
      </header>

      <div className="flex h-[27px] shrink-0 items-center gap-[5px] border-b border-[#8b9497] bg-[#c9ccd0]">
        <Combo label="楼层" value="" className="h-[22px] w-[33px] border-l-0" />
        <Combo label="构件类别" value="照明灯具(电)" className="h-[22px] w-[100px]" />
        <Combo label="构件名称" value="消防应急照明灯" className="h-[22px] w-[100px]" />
        <Combo label="分层" value="分层1" className="h-[22px] w-[100px]" />
      </div>

      <div className="flex min-h-0 flex-1">
        <LeftDock />
        <main className="relative min-w-0 flex-1 overflow-hidden bg-black">
          <Drawing />
          <ViewBar />
          <PickDialog />
        </main>
        <RightDock />
      </div>
    </div>
  );
}
